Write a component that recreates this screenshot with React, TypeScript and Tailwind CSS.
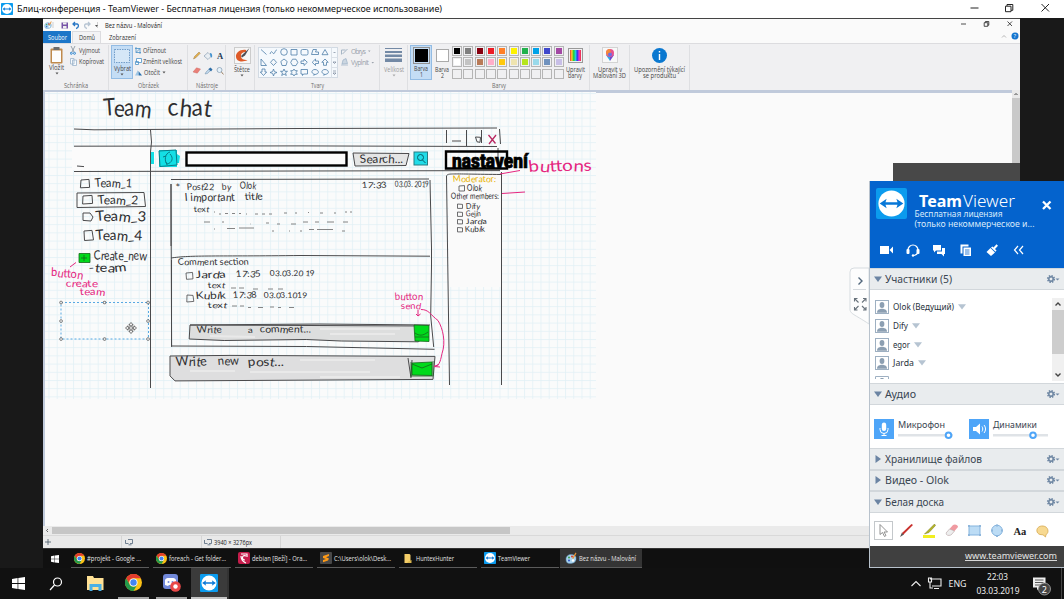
import React from "react";

type Kids = { children?: React.ReactNode };

const Label = ({ t, w, c = "text-[#555]" }: { t: string; w: number; c?: string }) => (
  <svg width={w} height="9" className={`block shrink-0 overflow-visible fill-current ${c}`}>
    <text x="0" y="6.8" fontSize="6.7" textLength={w} lengthAdjust="spacingAndGlyphs">{t}</text>
  </svg>
);

const Down = ({ c = "#555" }: { c?: string }) => (
  <svg width="4" height="3" viewBox="0 0 4 3" className="block shrink-0"><path d="M.5.5h3L2 2.4z" fill={c} /></svg>
);

const TvLogo = ({ size }: { size: number }) => (
  <svg width={size} height={size} viewBox="0 0 32 32" className="block shrink-0">
    <rect width="32" height="32" rx="2" fill="#0b9bee" />
    <circle cx="16" cy="16" r="13.5" fill="#fff" />
    <path d="M3.8 16l7.2-4.8-1.2 3.5h12.4L21 11.2l7.2 4.8-7.2 4.8 1.2-3.5H9.8l1.2 3.5z" fill="#0878d8" />
  </svg>
);

const Chrome = ({ size }: { size: number }) => (
  <svg width={size} height={size} viewBox="0 0 24 24" className="block shrink-0">
    <circle cx="12" cy="12" r="12" fill="#fbc116" />
    <path d="M1.6 6A12 12 0 0 1 22.4 6H12a6 6 0 0 0-5.2 9z" fill="#e33b2e" />
    <path d="M1.6 6a12 12 0 0 0 10.4 18l5.2-9A6 6 0 0 1 6.8 15z" fill="#229a4c" />
    <circle cx="12" cy="12" r="5.7" fill="#fff" />
    <circle cx="12" cy="12" r="4.5" fill="#4285f4" />
  </svg>
);

const WinLogo = ({ size }: { size: number }) => (
  <svg width={size} height={size} viewBox="0 0 13 13" fill="#fff" className="block shrink-0">
    <path d="M0 1.9L5.6 1v5.1H0zM6.3.9L13 0v6.1H6.3zM0 6.9h5.6V12L0 11.1zM6.3 6.9H13V13l-6.7-.9z" />
  </svg>
);

const Palette = ({ size }: { size: number }) => (
  <svg width={size} height={size} viewBox="0 0 12 12" className="block shrink-0">
    <path d="M1 7C1 4 4 2 7 2.500c3 .5 4.500 2 4 5s-3 4-6 4S1 10 1 7z" fill="#a9d4ef" stroke="#5c8fb5" strokeWidth=".5" />
    <circle cx="4" cy="5.500" r="1" fill="#3a9c47" /><circle cx="7" cy="4.500" r="1" fill="#d83a2c" />
    <circle cx="4" cy="8.500" r="1" fill="#3155c4" /><circle cx="8" cy="8.500" r="1.200" fill="#fff" />
    <path d="M7 6.500L10.500.5l1 .8-3 5.500z" fill="#e69135" />
  </svg>
);

const WinButtons = ({ small }: { small?: boolean }) => (
  <svg width={small ? 54 : 82} height="12" viewBox={small ? "0 0 54 12" : "0 0 82 12"} fill="none" stroke="#222" className={small ? "block" : "-mt-[2px] block"}>
    {small ? (
      <path d="M1 5h5M24.200 3.700h3.600v3.600h-3.600zM25.400 3.500v-1h3.400v3.700h-1M47.500 2.500l4.500 4.500M52 2.500L47.500 7" strokeWidth=".8" />
    ) : (
      <path d="M1.500 6h8M36.500 4.200h5.500v5.500h-5.500zM38 4V2.500h5.800v5.800H42M72.500 2l7.500 7.500M80 2l-7.500 7.500" strokeWidth="1" />
    )}
  </svg>
);

const Group = ({ cls, name, w, children }: Kids & { cls: string; name?: string; w?: number }) => (
  <div className={`flex h-[45px] shrink-0 flex-col border-r border-[#dedfe2] ${cls}`}>
    <div className="flex h-[36px] shrink-0">{children}</div>
    <div className="flex justify-center">{name && <Label t={name} w={w ?? 20} c="text-[#6b6b6b]" />}</div>
  </div>
);

const dk = "text-[#444]";

const colors = [
  ["#000000", "#7f7f7f", "#87000f", "#ec1c24", "#ff7f27", "#fdf200", "#22b14c", "#00a2e8", "#3f48cc", "#a349a4"],
  ["#ffffff", "#c3c3c3", "#b97a57", "#ffaec9", "#ffc90e", "#efe4b0", "#b5e61d", "#99d9ea", "#7092be", "#c8bfe7"],
  ["", "", "", "", "", "", "", "", "", ""],
];

const Ribbon = () => (
  <div className="flex h-[47px] shrink-0 border-t border-[#dcdcdf] bg-[#f0f0f2] pt-px">
    <Group cls="w-[66px]" name="Schránka" w={24}>
      <div className="flex w-[27px] flex-col items-center pt-[3px]">
        <svg width="13" height="17" viewBox="0 0 13 17" className="-mt-[1px] mb-[-1px]"><rect x=".5" y="1.500" width="12" height="15" rx="1" fill="#bf8a4c" /><rect x="2" y="3.500" width="9" height="11.500" fill="#fdfdfd" /><rect x="3.500" y="0" width="6" height="3" fill="#6c6c6c" /></svg>
        <Label t="Vložit" w={15} c={dk} />
        <Down />
      </div>
      <div className="flex flex-col gap-[2px] pt-[1px]">
        <div className="flex items-center gap-[3px]">
          <svg width="6" height="9" viewBox="0 0 6 9" fill="none" stroke="#2f86cf"><path d="M1 0l3 6M5 0L2 6" stroke="#7f8b98" strokeWidth=".8" /><circle cx="1.300" cy="7.300" r="1" /><circle cx="4.500" cy="7.300" r="1" /></svg>
          <Label t="Vyjmout" w={21} c={dk} />
        </div>
        <div className="flex items-center gap-[2px]">
          <svg width="7" height="8" viewBox="0 0 7 8" fill="#f7fafd" stroke="#9bb3ca" strokeWidth=".8"><path d="M.5.5h3.500V6H.5zM2.500 2h4v5.500h-4z" /></svg>
          <Label t="Kopírovat" w={25} c={dk} />
        </div>
      </div>
    </Group>
    <Group cls="w-[79px]" name="Obrázek" w={21}>
      <div className="ml-[2px] flex h-[34px] w-[22px] flex-col items-center border border-[#93bce4] bg-[#c4ddf5] pt-[3px]">
        <svg width="16" height="14" viewBox="0 0 16 14"><rect x=".5" y=".5" width="15" height="13" fill="#d5e7f7" stroke="#4a80b5" strokeWidth=".7" strokeDasharray="1.500 1" /></svg>
        <div className="pt-[1px]"><Label t="Vybrat" w={17} c={dk} /></div>
        <Down />
      </div>
      <div className="flex flex-col gap-[2px] pl-[2px] pt-[1px]">
        <div className="flex items-center gap-[2px]">
          <svg width="6" height="7" viewBox="0 0 6 7" fill="none" stroke="#4b92c8" strokeWidth=".8"><path d="M1 0v5.500h5M0 1.500h5V7M1 5.500L5.500 1" /></svg>
          <Label t="Oříznout" w={23} c={dk} />
        </div>
        <div className="flex items-center gap-[1px]">
          <svg width="7" height="7" viewBox="0 0 7 7" fill="#fff" stroke="#4b92c8" strokeWidth=".8"><path d="M1.500.5h5v4h-5zM.5 3.500h3v3h-3z" /></svg>
          <Label t="Změnit velikost" w={39} c={dk} />
        </div>
        <div className="flex items-center gap-[2px]">
          <svg width="7" height="7" viewBox="0 0 7 7"><path d="M0 6.500L3 1v5.500z" fill="#9ec6e6" /><path d="M3.500 2l3.500 4.500H3.500z" fill="#2a71ae" /></svg>
          <Label t="Otočit" w={16} c={dk} /><Down />
        </div>
      </div>
    </Group>
    <Group cls="w-[38px]" name="Nástroje" w={22}>
      <svg width="37" height="34" viewBox="188 44 37 34">
        <path d="M193.500 58l1-2.500 4.500-4.500 1.300 1.300-4.500 4.500z" fill="#e2b04e" stroke="#8a6a3a" strokeWidth=".4" />
        <path d="M204 55l4-3.500 3.500 3.500-3.500 3.500z" fill="#e9eef3" stroke="#7890a8" strokeWidth=".6" /><path d="M210 52c2 0 2.500 2 2 4.500-1.500 0-2-2-2-4.500z" fill="#4593d0" />
        <text x="217" y="58" fontSize="8.500" fontWeight="700" fontFamily="Liberation Serif, serif" fill="#1f3a55">A</text>
        <path d="M193 71l3.500-4.200 4 1.200-3.200 4.200z" fill="#e98078" stroke="#c9615b" strokeWidth=".4" />
        <path d="M205 73l1-2 3-3 1.500 1.500-3 3z" fill="#bcd4e8" stroke="#5d7f9c" strokeWidth=".4" /><path d="M208.500 68l2-1.500 2 2-1.500 2z" fill="#2f6fa8" />
        <circle cx="219.500" cy="69" r="2.500" fill="#e5f1fa" stroke="#8aa2b8" strokeWidth=".8" /><path d="M221.300 71l2.200 2.200" stroke="#8d6d4a" />
      </svg>
    </Group>
    <Group cls="w-[29px]">
      <div className="flex w-[32px] shrink-0 flex-col items-center pt-[2px]">
        <svg width="17" height="17" viewBox="0 0 17 17"><rect x=".5" y=".5" width="16" height="16" fill="#f6f6f6" stroke="#ccc" /><path d="M12 3C6 2 1.500 6 2 10c.5 5 7 5.500 11.500 3-4 0-6.500-1-6.500-4s2-4 5-4z" fill="#de5a28" /><path d="M7 9L15.500 1l-4.500 7.500-3 2z" fill="#4d4d55" /></svg>
        <div className="pt-[1px]"><Label t="Štětce" w={16} c={dk} /></div>
        <Down />
      </div>
    </Group>
    <Group cls="w-[125px]" name="Tvary" w={13}>
      <svg width="124" height="34" viewBox="256 44 124 34" fill="none">
        <rect x="259.500" y="46.500" width="79" height="30" fill="#f5f9fd" stroke="#d2dae3" /><path d="M332.500 46.500v30M332.500 56.500h6M332.500 66.500h6" stroke="#dbe1e8" />
        <g stroke="#4e7da8" strokeWidth=".8">
          <path d="M262 48.500l5.500 5M271 53c2-6 3 2 4.500-1s1.500-3 2.500-3" /><circle cx="285" cy="51" r="3.300" />
          <path d="M292 48.500h6v5.500h-6z" /><rect x="302" y="48.500" width="7" height="5.500" rx="1.500" /><path d="M312.500 53.500l1.500-5h3.500l-1 2.500h3v2.500zM326 48.500l3 5.200h-6z" />
          <path d="M262 58v6.500h5.500zM274.500 58l3 3.300-3 3.200-3-3.200zM285 58l3.200 2.500-1.200 4h-4l-1.200-4z" /><path d="M293.500 58.200h3.500l1.800 3.200-1.800 3.200h-3.500l-1.800-3.200z" />
          <path d="M302 60h3v-2l3.300 3.300-3.300 3.200v-2h-3zM319.500 60h-3v-2l-3.300 3.300 3.300 3.200v-2h3zM326 58l3.200 3.300h-1.700v3h-3v-3h-1.700z" />
          <path d="M263 68h3v3h1.700l-3.200 3.500-3.200-3.500h1.700zM274.500 68l.9 2.600 2.600.9-2.600.9-.9 2.600-.9-2.600-2.600-.9 2.600-.9zM285 68l1 2.300h2.500l-2 1.600.8 2.600-2.300-1.500-2.300 1.500.8-2.600-2-1.600h2.500z" />
          <path d="M295 68l1 1.700h2.300l-1.100 1.800 1.100 1.800H296l-1 1.700-1-1.700h-2.300l1.100-1.800-1.100-1.800h2.300z" /><path d="M302 68.500h6.500v4.500h-4l-1 1.500v-1.500H302z" /><path d="M315.500 73.200c-4-1-3-4.700.5-4.700s5 4 1 4.700l-2.500 1zM325.500 73.200c-4-1-3-4.700.5-4.700s5 4 1 4.700l-2.500 1z" />
        </g>
        <path d="M334.500 51.500h2M334 61h3l-1.500 1.500zM334 70h3M334 72h3l-1.500 1.500z" stroke="#64748b" strokeWidth=".6" />
        <path d="M342.500 53.500v-4.500h4M343.500 53l5-5" stroke="#a7b6c5" /><path d="M342 64h7M343 63l1-4 3-1.500 1.500 5z" stroke="#9bb0c5" fill="#cbd6e1" strokeWidth=".7" />
        <g fill="#9aa1aa" fontSize="6.700"><text x="352" y="52.600" textLength="15">Obrys</text><text x="352" y="63.800" textLength="18">Vyplnit</text></g>
        <path d="M369 49.500h2.500l-1.200 1.500zM372.500 61h2.500l-1.200 1.500z" fill="#9aa1aa" />
      </svg>
    </Group>
    <Group cls="w-[28px]">
      <div className="flex w-[27px] flex-col items-center pt-[3px]">
        <svg width="17" height="15" viewBox="0 0 17 15" fill="#7389a5"><path d="M0 0h17v1H0zM0 3h17v2H0zM0 6.500h17V9H0zM0 10.500h17V14H0z" /></svg>
        <div className="pt-[2px]"><Label t="Velikost" w={20} c="text-[#9a9a9a]" /></div><Down c="#aaa" />
      </div>
    </Group>
    <Group cls="w-[182px]" name="Barvy" w={14}>
      <div className="ml-[2px] flex h-[35px] w-[22px] shrink-0 flex-col items-center border border-[#93bce4] bg-[#c4ddf5] pt-[1px]">
        <div className="h-[17px] w-[17px] border border-[#919191] bg-[#c4ddf5] p-px"><div className="h-full w-full bg-black" /></div>
        <Label t="Barva" w={14} c={dk} />
        <div className="-mt-[3px]"><Label t="1" w={3} c={dk} /></div>
      </div>
      <div className="flex w-[20px] shrink-0 flex-col items-center pt-[4px]">
        <div className="h-[13px] w-[13px] border border-[#aaa] bg-white" />
        <div className="pt-[3px]"><Label t="Barva" w={14} c={dk} /></div>
        <div className="-mt-[3px]"><Label t="2" w={3} c={dk} /></div>
      </div>
      <div className="grid h-[34px] w-[112px] shrink-0 grid-cols-10 gap-x-[1px] gap-y-[1px] pt-[1px]">
        {colors.flat().map((c, i) => (
          <div key={i} className="h-[10px] w-[10px] border border-[#b5b5b5] p-px"><div className="h-full w-full" style={{ background: c || "#f0f0f2" }} /></div>
        ))}
      </div>
      <div className="flex w-[22px] shrink-0 flex-col items-center pt-[3px]">
        <div className="h-[15px] w-[15px] border border-[#999] p-px"><div className="h-full w-full bg-[linear-gradient(90deg,#e33,#fc3,#2c3,#2cd,#33e,#e3c,#e33)]" /></div>
        <div className="pt-[2px]"><Label t="Upravit" w={19} c={dk} /></div>
        <div className="-mt-[3px]"><Label t="barvy" w={14} c={dk} /></div>
      </div>
    </Group>
    <Group cls="w-[40px]">
      <div className="flex w-full flex-col items-center pt-[2px]">
        <svg width="16" height="17" viewBox="0 0 16 17"><rect x=".5" y=".5" width="15" height="15" fill="#f8f8f8" stroke="#d3d3d3" /><path d="M8 14L4 8l4-3z" fill="#2aa9e8" /><path d="M8 14l4-6-4-3z" fill="#6b48cf" /><circle cx="8" cy="6" r="4" fill="#e8528e" /><path d="M4 6a4 4 0 0 1 4-4l1 4-3 3z" fill="#f5893a" /><circle cx="8" cy="7.500" r="2" fill="#6c6ee3" /></svg>
        <div className="pt-[1px]"><Label t="Upravit v" w={24} c={dk} /></div>
        <div className="-mt-[3px]"><Label t="Malování 3D" w={33} c={dk} /></div>
      </div>
    </Group>
    <Group cls="w-[60px]">
      <div className="flex w-full flex-col items-center pt-[3px]">
        <svg width="15" height="16" viewBox="0 0 15 16"><circle cx="7.500" cy="7.500" r="7.500" fill="#0a78d0" /><path d="M7.500 3v1.600M7.500 6v6" stroke="#fff" strokeWidth="1.400" /></svg>
        <div className="pt-[1px]"><Label t="Upozornění týkající" w={51} c={dk} /></div>
        <div className="-mt-[3px]"><Label t="se produktu" w={33} c={dk} /></div>
      </div>
    </Group>
  </div>
);

type Note = [string, number, number, number, number, string?, number?];
const notes: Note[] = [
  ["Team", 104, 116, 47, 24], ["chat", 168, 116, 43, 24],
  ["Team_1", 95, 187, 37, 12], ["Team_2", 98, 204, 40, 12], ["Team_3", 96, 221, 50, 14], ["Team_4", 96, 240, 46, 14],
  ["Create_new", 94, 260, 53, 13], ["-team", 89, 272, 38, 12],
  ["button", 51, 276, 32, 12, "#e5267f", 6], ["create", 66, 287, 32, 10, "#e5267f"], ["team", 80, 295, 25, 10, "#e5267f"],
  ["*", 176, 191, 5, 10], ["Post22", 187, 190, 27, 9], ["by", 222, 190, 9, 9], ["Olok", 240, 189, 16, 10],
  ["I important", 185, 201, 50, 11], ["title", 245, 200, 18, 10], ["text", 194, 212, 15, 8],
  ["17:33", 362, 188, 25, 8.5], ["03.03. 2019", 395, 187, 34, 8.5],
  ["Comment section", 178, 265, 71, 9],
  ["Jarda", 196, 278, 30, 10], ["17:35", 236, 277, 25, 9], ["03.03.20 19", 270, 276, 45, 8],
  ["text", 208, 288, 17, 8], ["Kubík", 196, 299, 30, 10], ["17:38", 233, 298, 24, 9], ["03.03.1019", 264, 298, 43, 8], ["text", 208, 308, 19, 8],
  ["Write", 197, 333, 25, 9.5], ["a", 248, 333, 5, 8], ["comment...", 260, 332.5, 51, 10],
  ["Write", 176, 366, 31, 13], ["new", 218, 365, 21, 12], ["post...", 248, 366, 36, 12],
  ["Search...", 360, 163, 43, 11.5],
  ["Moderator:", 453, 182, 43, 9, "#e8b200"], ["Olok", 467, 191, 15, 9], ["Other members:", 451, 199, 48, 8.5],
  ["Dify", 466, 209, 14, 8], ["Gejin", 466, 216.5, 15, 8], ["Jarda", 466, 224, 21, 7.5], ["Kubík", 465, 232, 20, 8],
  ["buttons", 529, 172, 63, 16, "#e5267f", -1], ["button", 395, 300, 28, 10, "#e5267f"], ["send", 401, 309, 20, 9, "#e5267f"],
];

const Sketch = () => (
  <svg width="551" height="307" viewBox="45 92 551 307" className="-mt-[1px] block shrink-0" fill="none" fontFamily="Lato, sans-serif">
    <defs>
      <pattern id="grid" x="48.500" y="93" width="8.200" height="8.200" patternUnits="userSpaceOnUse"><path d="M0 .5h8.200M.5 0v8.200" stroke="#e2f0f5" strokeWidth=".8" /></pattern>
    </defs>
    <rect x="45" y="92" width="551" height="307" fill="#fafbfb" /><rect x="45" y="92" width="551" height="307" fill="url(#grid)" />
    <rect x="72" y="147" width="78" height="23" fill="#fbfbfb" /><path d="M449 175h52v112h-52z" fill="#fafafa" />
    <g stroke="#4a4a4c" strokeWidth="1">
      <path d="M74 129l20 .8L300 128.500l197-.5M74 146.200l226-.3 197 .6M74 171.500l226-.5 200-.4M150.500 130l1 12-1 10v236" />
      <path d="M77 166l7 .6M171 179.500l258-.5M171 184v62M171 184l.6 163M430 180l1.500 68v18l-.8 50 3 31M171 258c20-3 45-1.500 130-2.500l129 .7M171.500 260v86l135 .5 128 2.800" />
      <path d="M446.500 130v13M466.500 130v16M481.500 130v13M499.500 129l1 15M498 148v21M501.500 172v213M446.500 176l3 209M446.500 176c1-3 3-2 55-1.500" />
      <path d="M452 141h9M475.500 137l5 .3-.5 5-3-.5z" />
      <path d="M77 193l67-.5 1.500 14L77 207.500zM81 180l8-.6.6 8-9.200.4zM83 196l9-.6.6 8-10 .6zM83 213l7 0 3 4-2 4-8-.6zM84 231l8-.6 1.500 9.500-9 .6z" />
      <path d="M186 273l6.500-.6.5 6.500-6.500.4zM187 295l6 .4.8 6-7 .6zM459 186l5.500-.4v5.400h-5.500zM457.500 204l5 .4v4h-5zM457.500 212l5 .4v4h-5zM457.500 219.500l5 .4v4h-5zM457.500 227.500l5 .4v4h-5z" strokeWidth=".8" />
      <path d="M353 153l56 .5-3 12-51 .5z" fill="#e4e5e5" />
      <path d="M190 325l130-1 110 1M190 325l-.8 14 35 1.500 82-1 35 1.500 77 .8 2-1.500 8-.3v-14z" fill="#dddede" />
      <path d="M170 356l60-.6 205 1-2 23-258 1.500-5-5z" fill="#dededf" />
      <path d="M408 358l3 20M412 360l-1 17" />
    </g>
    <path d="M210 336l45 1M320 329h80M330 334h65M300 360h75M250 372h120M190 371h45M320 377h80" stroke="#e9e9e9" strokeWidth="2" />
    <g><path d="M159 150h18v17h-18zM151 152h3v12h-3zM177 154l3 2-1 7h-2z" fill="#14dfe5" /><path d="M159 151l17-1 1 15-17 1.500zM170 152c-5 1-6 9-3 12m-1-8l-3 1m7-3c4 4 2 9-3 10m-1-2l1 3" stroke="#087d87" /><rect x="414" y="152" width="13.500" height="13" fill="#21dce8" stroke="#277d83" /><circle cx="420.500" cy="157.500" r="3" stroke="#075d67" /><path d="M422.500 160l3 3" stroke="#075d67" /></g>
    <rect x="186.500" y="152.500" width="160" height="13" fill="#fbfbfb" stroke="#000" strokeWidth="2.400" />
    <path d="M446 151.500h61v17h-61z" stroke="#000" strokeWidth="2.400" />
    <text x="452" y="168.300" fill="#000" fontFamily="Roboto, sans-serif" fontSize="20" fontWeight="900" textLength="76" lengthAdjust="spacingAndGlyphs" stroke="#000" strokeWidth=".7">nastavení</text>
    <g fill="#00da1b" stroke="#17651c" strokeWidth=".8"><path d="M79 253.500h11v9H79zM414 325l15 .5v16l-14-.5zM412 363l20-1v13.500l-20-.5z" /><path d="M81 258h6M84 255v6M415 333c4 3 8 3 13-1M415 337h14M412 364l10 4 10-4M411 362v14h22v-15" fill="none" /></g>
    <path d="M488.500 135l7 8.500M496 135l-7 9" stroke="#b82861" strokeWidth="1.300" />
    <g stroke="#e5267f"><path d="M70 267l6-4.500M500 174l20-3.500M502 193.500l23-1.500M418 310v6l-2-2M418 316l2.500-2M421 309.500c8 0 9 5 17 11 5 8 8 22 4 33-2 10-3 12-8 13M434 366.500l5-2M434 366.500l6 .5" /></g>
    <g stroke="#777" strokeWidth=".9">
      <path d="M214 212h1M219 214h2M225 213.500h16M246 214h1M255 214h20M284 213h3M295 213h2M308 212.500h1M320 213h3M334 213h2M345 212h2M350 212h2" strokeDasharray="3 4" /><path d="M204 222h6M222 222h2M250 224h.5M266 223h3M277 224h3M291 224h5M303 222h5M315 222h4M327 222h7M343 222h5M214 229h1M227 228.500h8M239 228h15M272 231h2M289 231h1M300 231h2M309 229.500h5M317 229.500h16M342 231h3" />
      <path d="M231 288h16M253 289h5M268 289h6M278 289h7M232 306h12M248 307.500h3M258 307.500h5M270 307h4M278 307.500h3M289 307.500h6" strokeDasharray="5 3" />
    </g>
    {notes.map(([t, x, y, w, s, c, r], i) => (
      <text key={i} x={x} y={y} fontSize={s} fill={c ?? "#2e2e30"} textLength={w} lengthAdjust="spacingAndGlyphs" rotate="-5 6 -3 8 -6 4 -2 7 -4 5 -5" transform={`rotate(${r ?? 0} ${x} ${y})`}>{t}</text>
    ))}
    <g><rect x="61" y="302.500" width="87.500" height="36.500" stroke="#58a9e3" strokeDasharray="2 2" /><g fill="#fff" stroke="#555" strokeWidth=".8">{[[61, 302.500], [104.500, 302.500], [148, 302.500], [61, 321], [148, 321], [61, 339], [104.500, 339], [148, 339]].map(([x, y]) => <rect key={`${x}-${y}`} x={x - 1.200} y={y - 1.200} width="2.500" height="2.500" rx=".8" />)}</g></g>
    <path d="M131 322.500l2.200 2.500h-1.400v2.300h2.200v-1.500l2.500 2.200-2.500 2.200v-1.500h-2.200v2.300h1.400l-2.200 2.500-2.200-2.500h1.400v-2.300H128v1.500l-2.500-2.200 2.500-2.200v1.500h2.200V325h-1.400z" fill="#fff" stroke="#333" strokeWidth=".7" />
  </svg>
);

const Paint = () => (
  <div className="flex w-[977px] shrink-0 flex-col border-t border-[#444] bg-[#fafafa] font-['Open_Sans',sans-serif]">
    <div className="flex h-[12px] shrink-0 items-center justify-between pr-[6px]">
      <div className="flex items-center pl-px">
        <Palette size={8} />
        <svg width="47" height="10" viewBox="51 19 47 10" fill="none"><path d="M52 21v6M96.500 21v6" stroke="#bbb" strokeWidth=".7" /><path d="M60.500 21.500h6.500v6h-6.500z" fill="#7754a8" /><path d="M62 21.500h3.500v2H62zM62 25h3.500v2.500H62z" fill="#eee" /><path d="M72 23h4c2 0 2 4-1 4.500M74 21l-2 2 2 2" stroke="#2977c5" strokeWidth="1.300" /><path d="M89 23h-4c-2 0-2 4 1 4.500M87 21l2 2-2 2" stroke="#b6c4d2" strokeWidth="1.300" /><path d="M94 24h3l-1.500 2z" fill="#555" /></svg>
        <div className="pl-[6px]"><Label t="Bez názvu - Malování" w={57} c="text-[#222]" /></div>
      </div>
      <WinButtons small />
    </div>
    <div className="flex h-[12px] shrink-0">
      <div className="flex w-[28px] items-center justify-center bg-[#1c76c8]"><Label t="Soubor" w={19} c="text-white" /></div>
      <div className="ml-[1px] flex w-[29px] items-center justify-center border-x border-t border-[#dcdcdf] bg-[#f3f3f5]"><Label t="Domů" w={16} c="text-[#333]" /></div>
      <div className="flex items-center pl-[8px]"><Label t="Zobrazení" w={27} c="text-[#333]" /></div>
      <svg width="20" height="10" viewBox="1000 31 20 10" className="ml-auto"><path d="M1002 37.500l2-2 2 2" fill="none" stroke="#999" strokeWidth=".7" /><circle cx="1015" cy="36" r="3.500" fill="#1475cf" /><text x="1013.500" y="38.300" fill="#fff" fontSize="6">?</text></svg>
    </div>
    <Ribbon />
    <div className="flex h-[437px] shrink-0">
      <div className="flex w-[969px] flex-col border-l-2 border-t-[3px] border-[#c0cadb]">
        <Sketch />
      </div>
      <div className="flex w-[8px] flex-col bg-[#e9e9e9]">
        <svg width="8" height="8" viewBox="0 0 8 8" className="shrink-0"><path d="M2.500 5L4 3.500 5.500 5" fill="none" stroke="#444" /></svg>
        <div className="h-[428px] bg-[#c9c9c9]" />
      </div>
    </div>
    <div className="-mt-[1px] flex h-[9px] shrink-0 items-center bg-[#eaeaea]">
      <svg width="9" height="9" viewBox="0 0 9 9"><path d="M5 3L3.500 4.500 5 6" fill="none" stroke="#444" strokeWidth=".8" /></svg>
      <div className="h-[7px] w-[458px] bg-[#c6c6c6]" />
    </div>
    <div className="flex h-[13px] shrink-0 items-center border-t border-[#d9d9d9] bg-[#e9e9e9]">
      <div className="flex h-full w-[79px] items-center border-r border-[#d5d5d5] pl-[2px]"><svg width="6" height="6" viewBox="0 0 6 6" stroke="#456" strokeWidth=".8"><path d="M0 3h6M3 0v6" /></svg></div>
      <div className="flex h-full w-[80px] items-center border-r border-[#d5d5d5] pl-[3px]"><Screen /></div>
      <div className="flex h-full w-[79px] items-center gap-[2px] border-r border-[#d5d5d5] pl-[2px]"><Screen /><Label t="3940 × 3276px" w={38} c="text-[#222]" /></div>
    </div>
    <div className="flex h-[20px] shrink-0 border-t border-[#333] bg-[#101010]">
      <div className="flex w-[28px] items-center pl-[8px]"><WinLogo size={8} /></div>
      {tasks.map((t, i) => (
        <div key={t.t} className={`mr-[4px] flex h-[19px] shrink-0 items-center gap-[2px] border-b border-[#5b5b5b] ${i === 6 ? "-ml-[3px] w-[82px] bg-[#343434] pl-[5px]" : "w-[78px] pl-[3px]"}`}>
          {t.icon}<Label t={t.t} w={t.w} c="text-[#e4e4e4]" />
        </div>
      ))}
    </div>
  </div>
);

const Screen = () => <svg width="8" height="7" viewBox="0 0 8 7" fill="none" stroke="#52657a" strokeWidth=".8"><path d="M3 .5h4.500v4H5M.5 1v3.500h3M3.500 5.800h3" /></svg>;

const tasks = [
  { t: "#projekt - Google ...", w: 54, icon: <Chrome size={11} /> },
  { t: "foreach - Get folder...", w: 57, icon: <Chrome size={11} /> },
  { t: "debian [Beží] - Ora...", w: 55, icon: <svg width="12" height="12" viewBox="0 0 12 12"><rect width="12" height="12" rx="2" fill="#c51c4b" /><path d="M3 2h6v3M8 4C4 2 3 8 7 8M3 4c0 5 3 6 5 7" stroke="#fff" fill="none" strokeWidth="1.200" /></svg> },
  { t: "C:\\Users\\olok\\Desk...", w: 57, icon: <svg width="12" height="12" viewBox="0 0 12 12"><rect width="12" height="12" rx="1" fill="#484848" /><path d="M3 4l6-2v2L6 5.200l3 1.300-1 2-5 1.700V8l3-1-3-1z" fill="#ff9a16" /></svg> },
  { t: "HuntexHunter", w: 38, icon: <svg width="12" height="11" viewBox="0 0 11 11"><path d="M2 1h5l1 1v8H2z" fill="#f4ce69" /><path d="M5 9l4-2v3H5z" fill="#ddb84d" /></svg> },
  { t: "TeamViewer", w: 32, icon: <TvLogo size={12} /> },
  { t: "Bez názvu - Malování", w: 57, icon: <Palette size={12} /> },
];

const Gear = () => (
  <svg width="14" height="10" viewBox="0 0 14 10" className="ml-auto mr-[4px]"><circle cx="5" cy="5" r="3" fill="none" stroke="#7088a4" strokeWidth="2.200" strokeDasharray="1.300 1.056" /><circle cx="5" cy="5" r="2.200" fill="none" stroke="#7088a4" strokeWidth="1.500" /><path d="M9.500 4.500h4l-2 2z" fill="#7088a4" /></svg>
);

const Section = ({ t, w, open, slim }: { t: string; w: number; open?: boolean; slim?: boolean }) => (
  <div className={`flex shrink-0 items-center border-y border-[#d2d7db] bg-[#e9ecee] ${slim ? "h-[21.5px]" : "h-[22px]"}`}>
    <svg width="15" height="10" viewBox="0 0 15 10" className="shrink-0">{open ? <path d="M4 2.500h8L8 8z" fill="#6b84a3" /> : <path d="M5.500 1v8L11 5z" fill="#6b84a3" />}</svg>
    <svg width={w} height="16" className="overflow-visible"><text y="12.200" fontSize="10.800" fill="#3a4652" textLength={w} lengthAdjust="spacingAndGlyphs">{t}</text></svg>
    <Gear />
  </div>
);

const Person = ({ t, w }: { t: string; w: number }) => (
  <div className="flex h-[18.700px] shrink-0 items-center gap-[4px]">
    <svg width="14" height="14" viewBox="0 0 14 14" className="shrink-0"><rect x=".5" y=".5" width="13" height="13" fill="#fff" stroke="#9eb0c2" /><ellipse cx="7" cy="5" rx="2.400" ry="3" fill="#8c9fb2" /><path d="M2 12.800c0-3 2-3.500 4-4h2c2 .5 4 1 4 4z" fill="#8c9fb2" /></svg>
    <svg width={w} height="12" className="shrink-0 overflow-visible"><text y="9.300" fontSize="9" fill="#28323c" textLength={w} lengthAdjust="spacingAndGlyphs">{t}</text></svg>
    <svg width="8" height="6" viewBox="0 0 8 6" className="shrink-0"><path d="M0 .3h8L4 5.500z" fill="#b6c4d2" /></svg>
  </div>
);

const Volume = ({ t, w, v, mic }: { t: string; w: number; v: number; mic?: boolean }) => (
  <div className="flex w-[95px] gap-[4px]">
    <svg width="20" height="20" viewBox="0 0 20 20"><rect width="20" height="20" fill="#4ea5f8" />{mic ? <g><rect x="7.800" y="3.500" width="4.400" height="8.500" rx="2.200" fill="#fff" /><path d="M6 9v1.500a4 4 0 0 0 8 0V9M10 14.500v2M7.500 16.500h5" stroke="#fff" fill="none" /></g> : <g><path d="M4 8h3l4-3.500v11L7 12H4z" fill="#fff" /><path d="M13 7.500c1 1.500 1 3.500 0 5M15 6c2 2.500 2 5.500 0 8" stroke="#fff" fill="none" /></g>}</svg>
    <svg width="56" height="20" viewBox="0 0 56 20" className="overflow-visible"><text y="8.500" fontSize="9" fill="#3b4652" textLength={w} lengthAdjust="spacingAndGlyphs">{t}</text><path d="M0 16.300h55" stroke="#dfe3e7" strokeWidth="2.500" /><circle cx={v} cy="16.300" r="2.800" fill="#fff" stroke="#4ea5f8" strokeWidth="2" /></svg>
  </div>
);

const Viewer = () => (
  <div className="absolute left-[869px] top-[181px] flex h-[387px] w-[195px] flex-col border-b border-l border-[#b8c2cc] bg-white font-['Noto_Sans',sans-serif]">
    <div className="flex h-[87px] shrink-0 flex-col bg-[#0463cd]">
      <div className="flex pl-[6px] pt-[7px]">
        <TvLogo size={31} />
        <svg width="155" height="44" viewBox="907 188 155 44" fill="#fff">
          <text x="919" y="206.500" fontSize="15.500" fontWeight="700" textLength="43" lengthAdjust="spacingAndGlyphs">Team</text><text x="963" y="206.500" fontSize="15.500" fontWeight="300" textLength="52" lengthAdjust="spacingAndGlyphs">Viewer</text>
          <text x="914.500" y="217" fontSize="8.300" fill="#d8e9fa" textLength="88" lengthAdjust="spacingAndGlyphs">Бесплатная лицензия</text><text x="914.500" y="227" fontSize="8.300" fill="#d8e9fa" textLength="120" lengthAdjust="spacingAndGlyphs">(только некоммерческое и...</text>
          <path d="M1043 201.500l7.500 7.500M1050.500 201.500L1043 209" stroke="#fff" strokeWidth="2.300" />
        </svg>
      </div>
      <svg width="194" height="18" viewBox="870 232 194 18" fill="#fff" className="shrink-0 overflow-visible">
        <path d="M880 246h9v8h-9zM889.500 250l3.500-3.500v7z" />
        <path d="M908 251v-1a5 5 0 0 1 10 0v1c0 3-2 4-4 4.500" fill="none" stroke="#fff" strokeWidth="1.200" /><rect x="906.500" y="249" width="3" height="5" rx="1" /><rect x="916.500" y="249" width="3" height="5" rx="1" /><circle cx="913" cy="255.500" r="1.200" />
        <path d="M933 245h8v5.500h-5l-2 2v-2h-1z" /><path d="M942 248h3v6h-1v2.500l-2.500-2.500H937v-2.500h5z" />
        <path d="M960.500 244.500h8v2h-6v7h-2z" /><path d="M963.500 247.500h7.500v8.500h-7.500z" /><path d="M965 250h4.500M965 252h4.500M965 254h4.500" stroke="#0463cd" strokeWidth=".8" />
        <path d="M986.500 252l4-4 4.500 4.500-4 3.500zM991 247.500l1.500-1 4 4-1 1.200zM993.500 247.500l3-3.200 1.500 1.500-3 3.200z" />
        <path d="M1018 246l-3.500 4 3.500 4M1023 246l-3.500 4 3.500 4" fill="none" stroke="#fff" strokeWidth="1.200" />
      </svg>
    </div>
    <Section t="Участники (5)" w={67} open />
    <div className="flex h-[94px] shrink-0 overflow-hidden">
      <div className="flex w-[182px] flex-col pl-[5px] pt-[8px]">
        <Person t="Olok (Ведущий)" w={61} /><Person t="Dify" w={15} /><Person t="egor" w={17} /><Person t="Jarda" w={21} />
        <div className="flex h-[6px] shrink-0 overflow-hidden pt-[3px]">
          <svg width="14" height="3" viewBox="0 0 14 3"><path d="M.5 3V.5h13V3" fill="none" stroke="#9eb0c2" /><path d="M5 3c0-1.500 4-1.500 4 0z" fill="#8c9fb2" /></svg>
        </div>
      </div>
      <div className="mb-[3px] mt-[8px] flex w-[12px] flex-col justify-between bg-[#f0f0f0]">
        <svg width="12" height="12" viewBox="0 0 12 12"><path d="M3.500 7.500L6 5l2.500 2.500" fill="none" stroke="#444" strokeWidth="1.400" /></svg>
        <div className="mb-[15px] h-[44px] bg-[#cdcdcd]" />
        <svg width="12" height="12" viewBox="0 0 12 12"><path d="M3.500 4.500L6 7l2.500-2.500" fill="none" stroke="#444" strokeWidth="1.400" /></svg>
      </div>
    </div>
    <div className="-mt-[1px]"><Section t="Аудио" w={31} open /></div>
    <div className="flex h-[43px] shrink-0 pl-[4px] pt-[14px]"><Volume t="Микрофон" w={47} v={50.5} mic /><Volume t="Динамики" w={44} v={40} /></div>
    <Section t="Хранилище файлов" w={97} slim />
    <Section t="Видео - Olok" w={64} slim />
    <Section t="Белая доска" w={59} open slim />
    <svg width="194" height="33.5" viewBox="870 513 194 33.5" fill="none" className="block shrink-0">
      <rect x="874.500" y="521.500" width="18" height="18" stroke="#c4c8cb" /><path d="M880 524.500v10l2.500-2 2 4 1.500-1-2-3.500h3.500z" fill="#fff" stroke="#777" strokeWidth=".8" />
      <path d="M900 537l2-4.500 2 2z" fill="#555" /><path d="M902 533l9.500-9 1.500 1-9.500 9.500z" fill="#c9302c" />
      <path d="M923 535h12v3h-12z" fill="#f1ee20" /><path d="M924.500 534l3-3 7-7 1 1.500-6.500 7z" fill="#b5b424" stroke="#777b20" strokeWidth=".5" />
      <path d="M946 533l7-8c2-1.500 5 0 5 2l-7 8c-3 1-5 0-5-2z" fill="#f09aa1" /><path d="M946 533l3.500-4 5 2-3.500 4c-3 1-5 0-5-2z" fill="#eee" stroke="#aaa" strokeWidth=".5" />
      <rect x="969" y="526" width="11" height="9" fill="#bcdcf5" stroke="#84b3de" /><circle cx="997" cy="530.500" r="5.300" fill="#bcdcf5" stroke="#84b3de" /><g fill="#8fb7dc"><path d="M968 525h2v2h-2zM979 525h2v2h-2zM968 534h2v2h-2zM979 534h2v2h-2zM991 529.500h2v2h-2zM1001 529.500h2v2h-2zM996 524.500h2v2h-2zM996 535h2v2h-2z" /></g>
      <text x="1013.500" y="534.500" fill="#222" fontFamily="Liberation Serif, serif" fontWeight="700" fontSize="10.500">Aa</text>
      <path d="M1046 534.500c3-1 3-8-3-8.500-7-.5-8 7-3 8.500l3 .3 2.500 2.200z" fill="#f7d991" stroke="#d5a74d" strokeWidth=".8" />
    </svg>
    <div className="flex h-[21px] shrink-0 items-center justify-end bg-[#404040] pr-[7px]"><svg width="92" height="14" className="overflow-visible"><text y="9" fontSize="9.300" textDecoration="underline" fill="#e4e4e4" textLength="92" lengthAdjust="spacingAndGlyphs">www.teamviewer.com</text></svg></div>
  </div>
);

export default function App() {
  return (
    <div className="relative flex h-[599px] w-[1064px] flex-col overflow-hidden bg-[#191919] font-['Noto_Sans',sans-serif]">
      <header className="flex h-[18px] shrink-0 items-center bg-white pl-[1px] pr-[13px]">
        <TvLogo size={12} />
        <svg width="432" height="18" className="ml-[4px] overflow-visible"><text y="12.300" fontSize="9.500" fill="#111" textLength="425" lengthAdjust="spacingAndGlyphs">Блиц-конференция - TeamViewer - Бесплатная лицензия (только некоммерческое использование)</text></svg>
        <div className="ml-auto"><WinButtons /></div>
      </header>
      <main className="flex h-[550px] shrink-0 pl-[43px]"><Paint /></main>
      <footer className="flex h-[31px] shrink-0 items-center bg-[#111]">
        <div className="flex w-[37px] justify-center"><WinLogo size={13} /></div>
        <div className="flex w-[38px] justify-center"><svg width="14" height="14" viewBox="0 0 14 14" fill="none" stroke="#fff" strokeWidth="1.200"><circle cx="8.500" cy="5" r="4" /><path d="M5.500 8L1 13" /></svg></div>
        <div className="flex w-[40px] justify-center"><svg width="17" height="15" viewBox="0 0 17 15"><path d="M0 0h6l1 2h9.500v12H0z" fill="#ffe195" /><path d="M2.500 8h12v7h-3v-4h-6v4h-3z" fill="#4bb0e5" /></svg></div>
        <div className="flex h-full w-[37px] justify-center"><div className="flex h-full w-[31px] items-center justify-center border-b-2 border-[#a4a4a4]"><Chrome size={17} /></div></div>
        <div className="flex h-full w-[39px] justify-center"><div className="flex h-full w-[31px] items-center justify-center border-b-2 border-[#a4a4a4]"><svg width="19" height="19" viewBox="0 0 19 19"><rect x="1" y="1" width="15" height="15" rx="3" fill="#7289da" /><path d="M3 12V7c1-2 3-2 3-2h5s2 0 3 2v5l-3 1-1-1H7l-1 1z" fill="#fff" /><circle cx="6.500" cy="9" r="1" fill="#7289da" /><circle cx="10.500" cy="9" r="1" fill="#7289da" /><circle cx="13.500" cy="13.500" r="5.300" fill="#e94848" /><circle cx="13.500" cy="13.500" r="2.200" fill="#fff" /></svg></div></div>
        <div className="flex h-full w-[36px] items-center justify-center border-b-2 border-[#c5c5c5] bg-[#3b3b3b]"><TvLogo size={18} /></div>
        <div className="h-full w-[2px] bg-[#333]" />
        <svg width="153" height="31" viewBox="911 568 153 31" fill="none" stroke="#eee" className="ml-auto overflow-visible">
          <path d="M911.500 586l4.500-4.500 4.500 4.500M930 579h11v7h-9M934 588.500h5M928.500 578v4h3v-4zM930 582v6h3" strokeWidth="1.100" />
          <g fill="#eee" stroke="none" fontSize="9.500"><text x="948.500" y="587" textLength="18" lengthAdjust="spacingAndGlyphs">ENG</text><text x="987" y="579.500" textLength="21" lengthAdjust="spacingAndGlyphs">22:03</text><text x="976.500" y="593.500" textLength="43" lengthAdjust="spacingAndGlyphs">03.03.2019</text></g>
          <path d="M1033 577.500h12.500v10H1039l-2 3v-3h-4z" fill="#eee" stroke="none" /><path d="M1035 580h8.500M1035 582.500h8.500M1035 585h6" stroke="#333" strokeWidth=".8" />
          <circle cx="1044.500" cy="589" r="6" fill="#444" stroke="#aaa" strokeWidth=".8" /><text x="1041.800" y="592.500" fontSize="9" fill="#fff" stroke="none">2</text><path d="M1061.500 568v31" stroke="#444" />
        </svg>
      </footer>
      <div className="absolute left-[893px] top-[163px] h-[18px] w-[127px] bg-[#484848]" />
      <svg width="20" height="60" viewBox="0 0 20 60" className="absolute left-[849px] top-[267px]" fill="none"><path d="M20 1H5Q1 1 1 5v37c0 5 4 5 19 15z" fill="#fdfdfd" stroke="#d7dce0" /><path d="M4 22.500h13" stroke="#d6dade" /><path d="M9.500 10.500l3.500 3.500-3.500 3.500" stroke="#52677c" strokeWidth="1.400" /><path d="M5.500 34.500v-3h3M14 31.500h3v3M5.500 40v3h3M14 43h3v-3M6 32l3.500 3.500M16.500 32L13 35.500M6 42.500L9.500 39M16.500 42.500L13 39" stroke="#69737c" strokeWidth="1.100" /></svg>
      <Viewer />
    </div>
  );
}
